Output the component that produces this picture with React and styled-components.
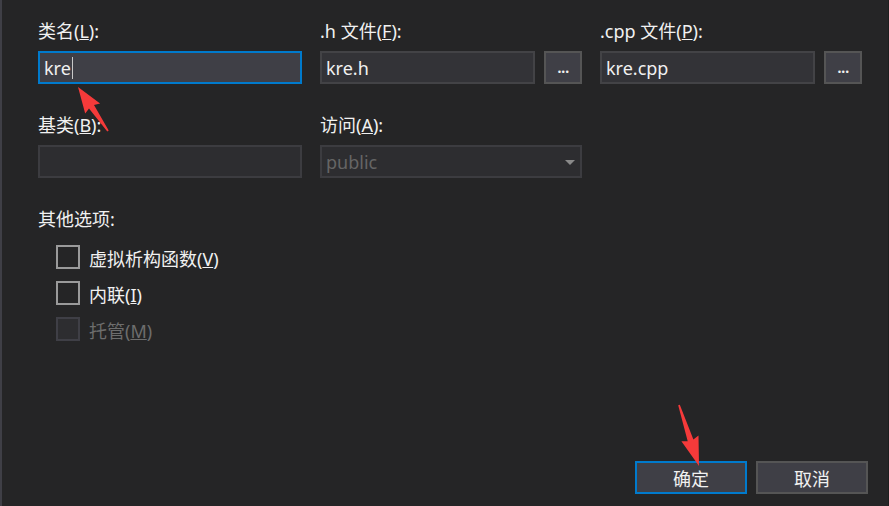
import React from "react";
import styled, { createGlobalStyle } from "styled-components";

const Global = createGlobalStyle`
  html, body { margin: 0; padding: 0; background: #252526; }
  body {
    font-family: "Noto Sans", "Noto Sans CJK SC", sans-serif;
    color: #f1f1f1;
  }
  * { box-sizing: border-box; }
`;

const Page = styled.div`
  position: relative;
  width: 889px;
  height: 506px;
  overflow: hidden;
  background: #252526;
  border-left: 2px solid #3f3f46;
  border-right: 1px solid #1e1e1e;
  padding: 19px 0 12px 36px;
  display: flex;
  flex-direction: column;
  font-size: 18px;
`;

const Grid = styled.div`
  display: grid;
  grid-template-columns: 264px 262px 262px;
  column-gap: 18px;
  row-gap: 29px;
`;

const Field = styled.div`
  display: flex;
  flex-direction: column;
  gap: 8px;
`;

const Label = styled.div`
  height: 24px;
  line-height: 24px;
  color: ${(p) => (p.$dim ? "#6d6d6d" : "#f1f1f1")};
  white-space: nowrap;
`;

const Input = styled.div`
  position: relative;
  height: 33px;
  flex: none;
  display: flex;
  align-items: center;
  padding: 0 4px;
  font-size: 18px;
  border: 2px solid ${(p) => (p.$focus ? "#007acc" : p.$disabled ? "#3c3c40" : "#434346")};
  background: ${(p) => (p.$focus ? "#3f3f46" : p.$disabled ? "#2d2d30" : "#333337")};
  color: ${(p) => (p.$disabled ? "#656565" : "#f1f1f1")};
`;

const Row = styled.div`
  display: flex;
  gap: 9px;
  & > ${Input} {
    flex: 1 1 0;
    min-width: 0;
  }
`;

const Caret = styled.span`
  display: inline-block;
  width: 1px;
  height: 22px;
  margin-left: 1px;
  background: #c8c8c8;
`;

const Browse = styled.div`
  width: 38px;
  height: 33px;
  flex: none;
  border: 2px solid #555555;
  background: #3f3f46;
  display: flex;
  align-items: center;
  justify-content: center;
  font-size: 16px;
  font-weight: 600;
  padding-bottom: 2px;
  letter-spacing: -0.5px;
`;

const DropArrow = styled.span`
  position: absolute;
  right: 5px;
  top: 13px;
  width: 0;
  height: 0;
  border-left: 5px solid transparent;
  border-right: 5px solid transparent;
  border-top: 5px solid #8a8a8a;
`;

const Section = styled.div`
  margin-top: 29px;
  display: flex;
  flex-direction: column;
`;

const Checks = styled.div`
  margin-top: 14px;
  padding-left: 18px;
  display: flex;
  flex-direction: column;
  gap: 12px;
`;

const CheckRow = styled.div`
  display: flex;
  align-items: center;
  gap: 9px;
  height: 24px;
  color: ${(p) => (p.$disabled ? "#6d6d6d" : "#f1f1f1")};
`;

const Box = styled.span`
  width: 24px;
  height: 24px;
  flex: none;
  border: 2px solid ${(p) => (p.$disabled ? "#3f3f46" : "#9a9a9a")};
  background: ${(p) => (p.$disabled ? "#2d2d30" : "transparent")};
`;

const CheckText = styled.span`
  line-height: 24px;
  padding-top: 3px;
`;

const Footer = styled.div`
  margin-top: auto;
  display: flex;
  justify-content: flex-end;
  gap: 9px;
  padding-right: 20px;
`;

const Button = styled.div`
  width: 112px;
  height: 33px;
  display: flex;
  align-items: center;
  justify-content: center;
  border: 2px solid ${(p) => (p.$primary ? "#007acc" : "#555555")};
  background: #3f3f46;
  font-size: 18px;
`;

const Overlay = styled.svg`
  position: absolute;
  left: 0;
  top: 0;
  pointer-events: none;
`;

function arrowPoints(tx, ty, px, py, headLen = 24, headW = 9, w0 = 0.8, w1 = 3) {
  const dx = px - tx;
  const dy = py - ty;
  const len = Math.hypot(dx, dy);
  const ux = dx / len;
  const uy = dy / len;
  const nx = -uy;
  const ny = ux;
  const bx = px - ux * headLen;
  const by = py - uy * headLen;
  const pts = [
    [tx + nx * w0, ty + ny * w0],
    [bx + nx * w1, by + ny * w1],
    [bx + nx * headW - ux * 2, by + ny * headW - uy * 2],
    [px, py],
    [bx - nx * headW - ux * 2, by - ny * headW - uy * 2],
    [bx - nx * w1, by - ny * w1],
    [tx - nx * w0, ty - ny * w0],
  ];
  return pts.map((p) => p.map((v) => v.toFixed(1)).join(",")).join(" ");
}

const M = ({ children }) => <u>{children}</u>;

export default function App() {
  return (
    <>
      <Global />
      <Page>
        <Grid>
          <Field>
            <Label>类名(<M>L</M>):</Label>
            <Input $focus>
              kre<Caret />
            </Input>
          </Field>
          <Field>
            <Label>.h 文件(<M>F</M>):</Label>
            <Row>
              <Input>kre.h</Input>
              <Browse>...</Browse>
            </Row>
          </Field>
          <Field>
            <Label>.cpp 文件(<M>P</M>):</Label>
            <Row>
              <Input>kre.cpp</Input>
              <Browse>...</Browse>
            </Row>
          </Field>
          <Field>
            <Label>基类(<M>B</M>):</Label>
            <Input $disabled />
          </Field>
          <Field>
            <Label>访问(<M>A</M>):</Label>
            <Input $disabled>
              public
              <DropArrow />
            </Input>
          </Field>
        </Grid>
        <Section>
          <Label>其他选项:</Label>
          <Checks>
            <CheckRow>
              <Box />
              <CheckText>虚拟析构函数(<M>V</M>)</CheckText>
            </CheckRow>
            <CheckRow>
              <Box />
              <CheckText>内联(<M>I</M>)</CheckText>
            </CheckRow>
            <CheckRow $disabled>
              <Box $disabled />
              <CheckText>托管(<M>M</M>)</CheckText>
            </CheckRow>
          </Checks>
        </Section>
        <Footer>
          <Button $primary>确定</Button>
          <Button>取消</Button>
        </Footer>
        <Overlay width="889" height="506" viewBox="0 0 889 506">
          <polygon points={arrowPoints(106, 131, 76, 87)} fill="#f53a3a" />
          <polygon points={arrowPoints(677, 405, 697, 466, 27)} fill="#f53a3a" />
        </Overlay>
      </Page>
    </>
  );
}
